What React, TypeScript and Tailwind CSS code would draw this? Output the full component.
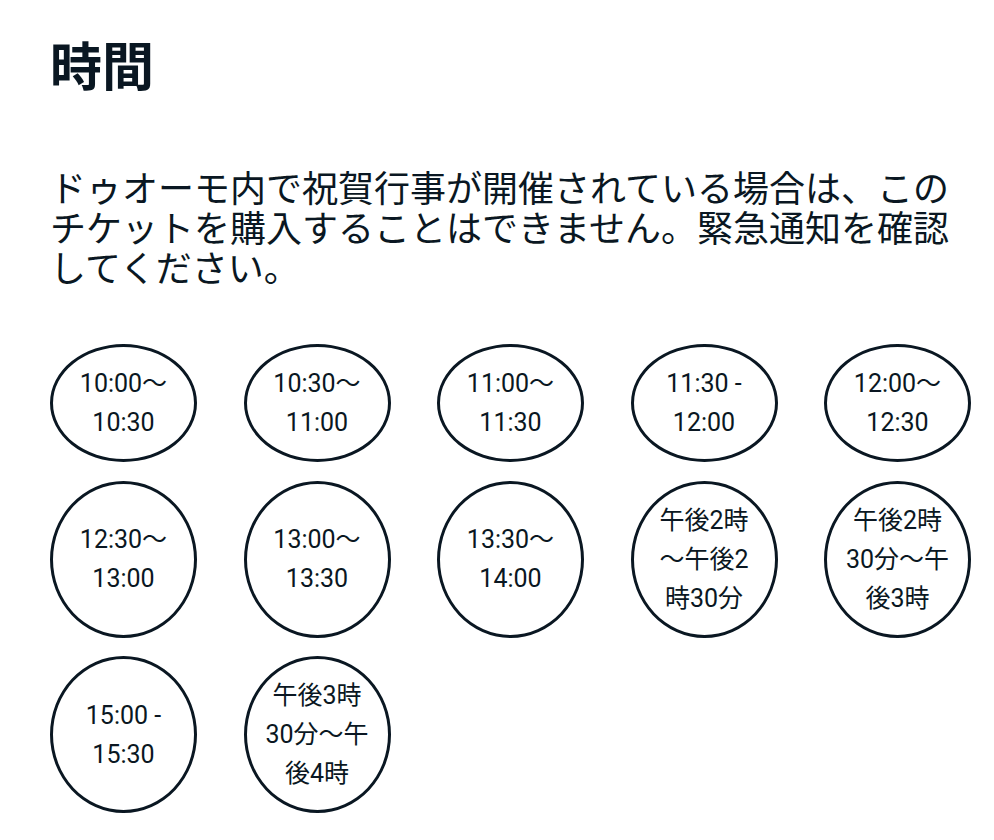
import React from "react";

const slots: string[] = [
  "10:00〜10:30",
  "10:30〜11:00",
  "11:00〜11:30",
  "11:30 - 12:00",
  "12:00〜12:30",
  "12:30〜13:00",
  "13:00〜13:30",
  "13:30〜14:00",
  "午後2時〜午後2時30分",
  "午後2時30分〜午後3時",
  "15:00 - 15:30",
  "午後3時30分〜午後4時",
];

export default function App() {
  return (
    <div
      lang="ja"
      className="bg-white text-[#0a1722] pl-[50px] pr-[23px] pt-[38px] pb-[30px] font-['Roboto','Noto_Sans_CJK_JP',sans-serif]"
    >
      <h1 className="text-[52px] leading-[52px] font-bold font-['Noto_Sans_CJK_JP',sans-serif]">
        時間
      </h1>
      <p className="mt-[76px] text-[36px] leading-[40px] font-['Noto_Sans_CJK_JP',sans-serif]">
        ドゥオーモ内で祝賀行事が開催されている場合は、このチケットを購入することはできません。緊急通知を確認してください。
      </p>
      <div className="mt-[58px] grid grid-cols-[repeat(5,147px)] gap-x-[46.5px] gap-y-[18.5px]">
        {slots.map((s) => (
          <button
            key={s}
            className="flex items-center justify-center rounded-[50%] border-[3px] border-[#0a1722] bg-white px-[16px] py-[17px] text-center text-[25px] leading-[39px] text-[#0a1722] font-['Roboto','Noto_Sans_CJK_JP',sans-serif]"
          >
            <span className="block w-full break-words [line-break:loose]">{s}</span>
          </button>
        ))}
      </div>
    </div>
  );
}
